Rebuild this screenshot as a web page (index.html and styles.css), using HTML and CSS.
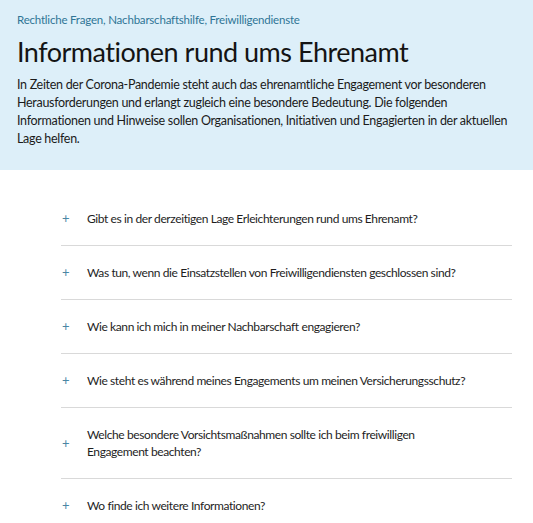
FILE: index.html
```html
<!DOCTYPE html>
<html lang="de">
<head>
<meta charset="utf-8">
<title>Informationen rund ums Ehrenamt</title>
<link rel="stylesheet" href="styles.css">
</head>
<body>
<header class="hero">
  <div class="crumbs">Rechtliche Fragen, Nachbarschaftshilfe, Freiwilligendienste</div>
  <h1 class="title">Informationen rund ums Ehrenamt</h1>
  <p class="intro">In Zeiten der Corona-Pandemie steht auch das ehrenamtliche Engagement vor besonderen Herausforderungen und erlangt zugleich eine besondere Bedeutung. Die folgenden Informationen und Hinweise sollen Organisationen, Initiativen und Engagierten in der aktuellen Lage helfen.</p>
</header>
<ul class="faq">
  <li class="item"><span class="plus">+</span><span class="q">Gibt es in der derzeitigen Lage Erleichterungen rund ums Ehrenamt?</span></li>
  <li class="item"><span class="plus">+</span><span class="q">Was tun, wenn die Einsatzstellen von Freiwilligendiensten geschlossen sind?</span></li>
  <li class="item"><span class="plus">+</span><span class="q">Wie kann ich mich in meiner Nachbarschaft engagieren?</span></li>
  <li class="item"><span class="plus">+</span><span class="q">Wie steht es während meines Engagements um meinen Versicherungsschutz?</span></li>
  <li class="item"><span class="plus">+</span><span class="q">Welche besondere Vorsichtsmaßnahmen sollte ich beim freiwilligen<br>Engagement beachten?</span></li>
  <li class="item"><span class="plus">+</span><span class="q">Wo finde ich weitere Informationen?</span></li>
</ul>
</body>
</html>
```

FILE: styles.css
```css
html, body {
  margin: 0;
  padding: 0;
  background: #ffffff;
  font-family: Lato, "Open Sans", sans-serif;
  color: #1b1b1b;
}
.hero {
  background: #ddeff9;
  padding: 12px 20px 22px 17px;
}
.crumbs {
  font-size: 11.5px;
  line-height: 16px;
  letter-spacing: -0.2px;
  color: #2f7596;
}
.title {
  margin: 6px 0 0 0;
  font-size: 27px;
  line-height: 36px;
  letter-spacing: -0.5px;
  font-weight: 400;
  color: #141414;
}
.intro {
  margin: 6px 0 0 0;
  font-size: 12.5px;
  line-height: 18px;
  letter-spacing: -0.3px;
}
.faq {
  list-style: none;
  margin: 22px 21px 0 61px;
  padding: 0;
}
.item {
  display: flex;
  align-items: center;
  padding: 18px 0;
  border-bottom: 1px solid #d9d9d9;
  font-size: 12px;
  line-height: 17px;
  letter-spacing: -0.4px;
}
.plus {
  width: 25px;
  flex: none;
  color: #4a86a4;
  font-size: 13px;
  padding-left: 1px;
  letter-spacing: 0;
}
.q {
  color: #1e1e1e;
}
```
